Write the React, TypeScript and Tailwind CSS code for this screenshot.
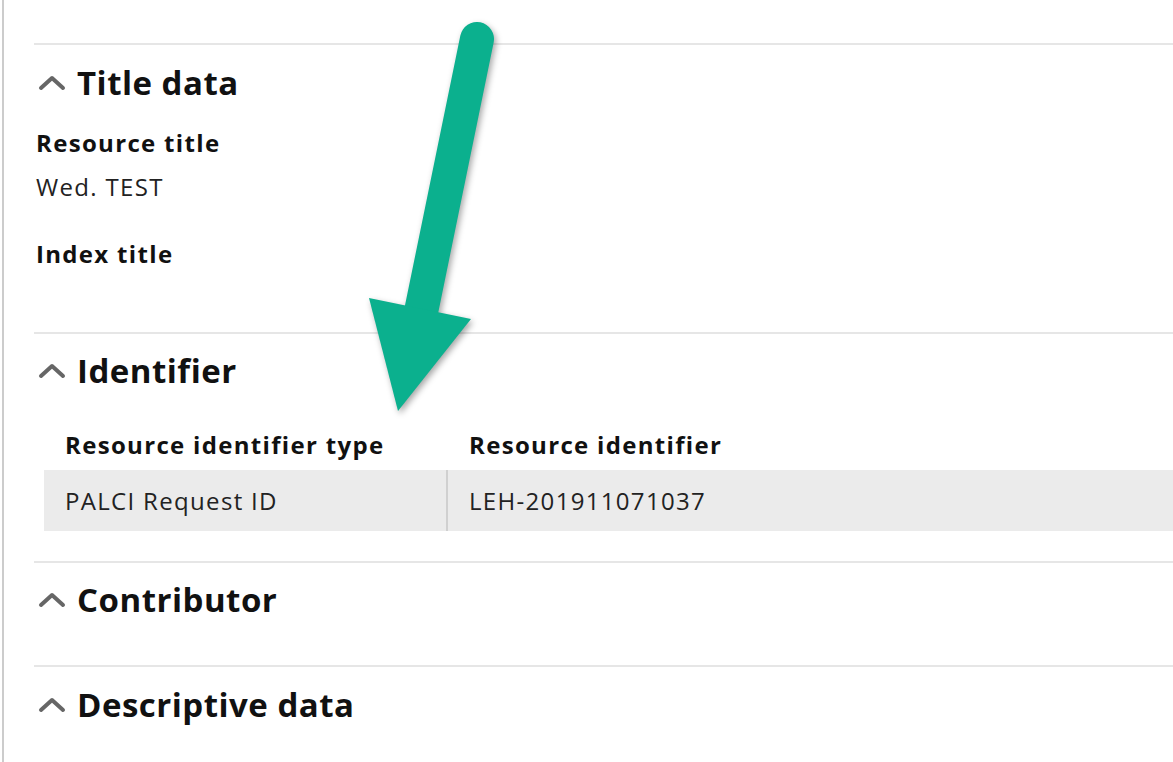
import type { ReactNode } from "react";

const font = { fontFamily: "'Open Sans', 'Noto Sans', sans-serif" };

const Chevron = () => (
  <svg width="28" height="16" viewBox="0 0 28 16" className="shrink-0">
    <path d="M3 13 L14 3 L25 13" fill="none" stroke="#666" strokeWidth="4" strokeLinecap="round" strokeLinejoin="round" />
  </svg>
);

const SectionHeading = ({ title, className = "h-[76px]" }: { title: string; className?: string }) => (
  <div className={`flex items-center gap-[11px] pl-[4px] ${className}`}>
    <Chevron />
    <h2 className="text-[33px] font-bold tracking-[0.015em] text-[#111]">{title}</h2>
  </div>
);

const Section = ({ children }: { children: ReactNode }) => (
  <section className="border-t-2 border-[#e6e6e6]">{children}</section>
);

const Arrow = () => (
  <svg
    className="pointer-events-none absolute left-0 top-0"
    width="1173"
    height="762"
    viewBox="0 0 1173 762"
    style={{ filter: "drop-shadow(2px 3px 3px rgba(0,0,0,0.35))" }}
  >
    <line x1="477" y1="39" x2="421" y2="312" stroke="#0bb08e" strokeWidth="34" strokeLinecap="round" />
    <polygon points="369,298 471,319 398,411" fill="#0bb08e" />
  </svg>
);

export default function App() {
  return (
    <div className="relative h-[762px] w-[1173px] overflow-hidden bg-white" style={font}>
      <div className="ml-[2px] h-full border-l-2 border-[#cccccc] pl-[30px] pt-[43px]">
        <Section>
          <SectionHeading title="Title data" />
          <div className="flex h-[44px] items-center pl-[2px] text-[24px] font-bold tracking-[0.055em] text-[#111]">
            Resource title
          </div>
          <div className="flex h-[44px] items-center pl-[2px] text-[24px] tracking-[0.055em] text-[#222]">
            Wed. TEST
          </div>
          <div className="mt-[23px] flex h-[44px] items-center pl-[2px] text-[24px] font-bold tracking-[0.055em] text-[#111]">
            Index title
          </div>
          <div className="h-[56px]" />
        </Section>

        <Section>
          <SectionHeading title="Identifier" className="h-[74px]" />
          <div className="ml-[10px] mt-[12px]">
            <div className="flex h-[50px] items-center text-[24px] font-bold tracking-[0.055em] text-[#111]">
              <div className="w-[402px] pl-[21px]">Resource identifier type</div>
              <div className="pl-[23px]">Resource identifier</div>
            </div>
            <div className="flex h-[61px] items-center bg-[#ebebeb] text-[24px] tracking-[0.055em] text-[#222]">
              <div className="flex h-full w-[402px] items-center pl-[21px]">PALCI Request ID</div>
              <div className="flex h-full items-center border-l-2 border-[#d0d0d0] pl-[21px]">LEH-201911071037</div>
            </div>
          </div>
          <div className="h-[30px]" />
        </Section>

        <Section>
          <SectionHeading title="Contributor" className="h-[74px]" />
          <div className="h-[28px]" />
        </Section>

        <Section>
          <SectionHeading title="Descriptive data" />
        </Section>
      </div>
      <Arrow />
    </div>
  );
}
